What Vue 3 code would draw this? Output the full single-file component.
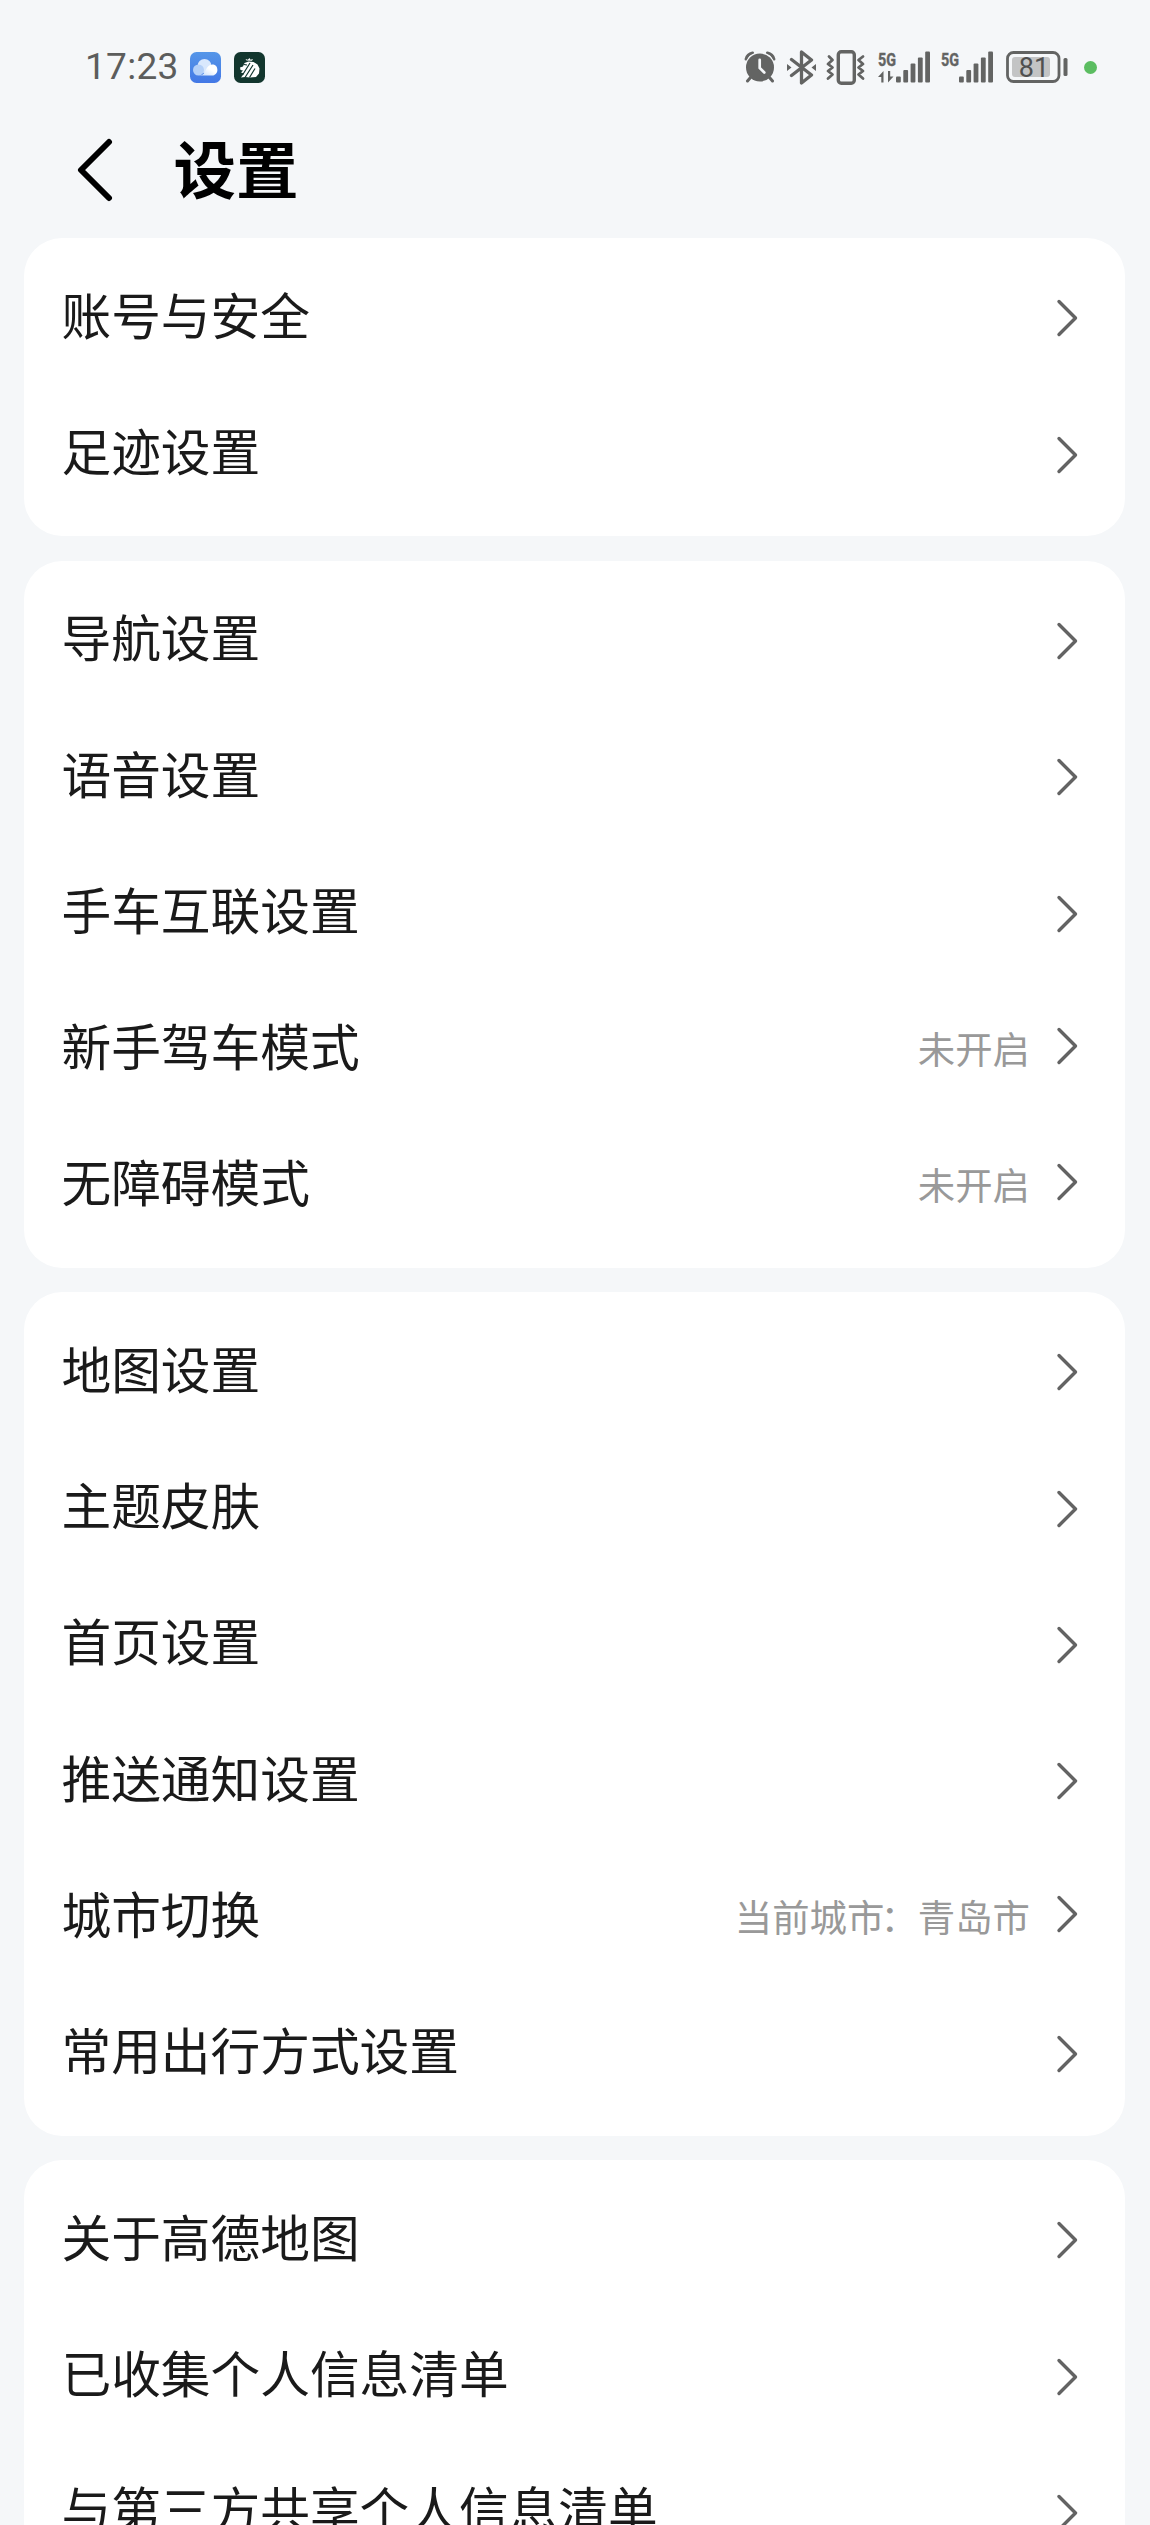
<template>
  <div class="page">
    <div class="status">
      <div class="status-left">
        <span class="time">17:23</span>
        <svg class="app-icon" viewBox="0 0 31 31">
          <defs>
            <linearGradient id="sky" x1="0" y1="0" x2="0" y2="1">
              <stop offset="0" stop-color="#5596e8" />
              <stop offset="1" stop-color="#4378e6" />
            </linearGradient>
            <linearGradient id="cloud" x1="0" y1="1" x2="1" y2="0">
              <stop offset="0" stop-color="#c3dafb" />
              <stop offset="0.6" stop-color="#fff" />
            </linearGradient>
          </defs>
          <rect width="31" height="31" rx="6.5" fill="url(#sky)" />
          <circle cx="14.5" cy="14" r="7" fill="#d9e8fd" />
          <circle cx="8.5" cy="18" r="5.5" fill="#b4d0f8" />
          <path d="M8.5 23.5c7 0 6-5 9.500-9 3-3.500 9.400-2.500 9.400 3.400 0 3-2.400 5.600-5.400 5.600z" fill="url(#cloud)" />
        </svg>
        <svg class="app-icon" viewBox="0 0 31 31">
          <rect width="31" height="31" rx="6.5" fill="#12362e" />
          <path d="M6 15.500l3-1 1.500-3.500 4-1.500 5 .5 4 2.500 2 4-.5 5-3 3.500-6 .5-5-.5-4 .5 3-4-3-1 2-2-2.500-.5z" fill="#fff" />
          <path d="M12.500 8.500l-1-1.500 2.300.8L15.500 6l1 1.800L19 7l-1 1.800z" fill="#fff" />
          <path d="M16 11L8.500 23M19 13L11 25.500M21 16.500L15.500 25.500M10 12.500l3 .5" stroke="#12362e" stroke-width="1.2" fill="none" />
        </svg>
      </div>

      <div class="status-right">
        <svg class="alarm" width="32" height="32" viewBox="0 0 32 32">
          <path d="M2.200 8A8 8 0 0 1 8.500 2M29.800 8A8 8 0 0 0 23.500 2" fill="none" stroke="#636463" stroke-width="3.2" stroke-linecap="round" />
          <circle cx="16" cy="16.5" r="15.3" fill="#f5f7f9" />
          <path d="M6.500 26.500l-3 3.500M25.500 26.500l3 3.500" fill="none" stroke="#636463" stroke-width="3" stroke-linecap="round" />
          <circle cx="16" cy="16.5" r="14" fill="#636463" />
          <path d="M15.700 8.800v8.200l4.600 4.500" fill="none" stroke="#f5f7f9" stroke-width="2.7" stroke-linecap="round" />
        </svg>
        <svg class="bluetooth" width="29" height="35" viewBox="0 0 29 35">
          <path d="M4.500 9.500L24.500 25 14.500 33V2l10 8L4.500 25.500" fill="none" stroke="#636463" stroke-width="3.3" stroke-linejoin="round" stroke-linecap="round" />
          <path d="M0 14l4.500 3.500L0 21zM29 14l-4.500 3.500L29 21z" fill="#636463" />
        </svg>
        <svg class="vibrate" width="40" height="35" viewBox="0 0 40 35">
          <rect x="12.300" y="1.800" width="16" height="31.400" rx="3" fill="none" stroke="#636463" stroke-width="3.4" />
          <path d="M3 6.500l3.500 3.500-4.500 4 4.500 3.500-4.500 3.500 4.500 3.500-4.500 4M37 6.500l-4.500 3.500 4.500 4-4.500 3.500 4.500 3.500-4.500 3.500 4.500 4" fill="none" stroke="#636463" stroke-width="2.8" stroke-linejoin="round" stroke-linecap="round" />
        </svg>
        <svg class="signal" width="53" height="32" viewBox="0 0 53 32">
          <text class="net" x="0" y="14.5" textLength="18" lengthAdjust="spacingAndGlyphs">5G</text>
          <path d="M0 26l5.500-6v11.500H3.300V26zM15.500 25.500L10 31.500V20h2.200v5.500z" fill="#636463" />
          <rect v-for="(bar, i) in bars" :key="i" :x="18 + i * 7.3" :y="31.5 - bar" width="4.8" :height="bar" rx="1" fill="#636463" />
        </svg>
        <svg class="signal second" width="53" height="32" viewBox="0 0 53 32">
          <text class="net" x="0" y="14.5" textLength="18" lengthAdjust="spacingAndGlyphs">5G</text>
          <rect v-for="(bar, i) in bars" :key="i" :x="18 + i * 7.3" :y="31.5 - bar" width="4.8" :height="bar" rx="1" fill="#636463" />
        </svg>
        <svg class="battery" width="62" height="32" viewBox="0 0 62 32">
          <rect x="1.5" y="1.5" width="51.5" height="29" rx="6" fill="none" stroke="#636463" stroke-width="2.8" />
          <rect x="6" y="6" width="38" height="20" rx="3" fill="#c3c4c5" />
          <rect x="57.5" y="7" width="4" height="18" rx="1.5" fill="#636463" />
          <text class="level" x="28" y="25.5" text-anchor="middle">81</text>
        </svg>
        <span class="dot"></span>
      </div>
    </div>

    <div class="header">
      <svg class="back" width="36" height="64" viewBox="0 0 36 64">
        <path d="M32 4L4 32l28 28" fill="none" stroke="#000" stroke-width="6" stroke-linecap="round" stroke-linejoin="round" />
      </svg>
      <h1 class="title">设置</h1>
    </div>

    <div class="groups">
      <div v-for="(group, g) in groups" :key="g" class="card">
        <div v-for="item in group" :key="item.label" class="row">
          <span class="label">{{ item.label }}</span>
          <span v-if="item.value" class="value"><template v-if="item.prefix">{{ item.prefix }}<span class="colon">：</span></template>{{ item.value }}</span>
          <svg class="arrow" :class="{ raised: item.value }" width="22" height="38" viewBox="0 0 22 38">
            <path d="M3 2.500L19.500 19 3 35.500" fill="none" stroke="#636363" stroke-width="3.4" stroke-linecap="round" stroke-linejoin="round" />
          </svg>
        </div>
      </div>
    </div>
  </div>
</template>

<script setup>
import { ref } from 'vue';

// Heights of the signal bars
const bars = [6, 12.5, 19, 25, 31];

const groups = ref([
  [
    { label: '账号与安全' },
    { label: '足迹设置' }
  ],
  [
    { label: '导航设置' },
    { label: '语音设置' },
    { label: '手车互联设置' },
    { label: '新手驾车模式', value: '未开启' },
    { label: '无障碍模式', value: '未开启' }
  ],
  [
    { label: '地图设置' },
    { label: '主题皮肤' },
    { label: '首页设置' },
    { label: '推送通知设置' },
    { label: '城市切换', prefix: '当前城市', value: '青岛市' },
    { label: '常用出行方式设置' }
  ],
  [
    { label: '关于高德地图' },
    { label: '已收集个人信息清单' },
    { label: '与第三方共享个人信息清单' }
  ]
]);
</script>

<style>
body {
  margin: 0;
  background: #f5f7f9;
}
</style>

<style scoped>
.page {
  height: 2525px;
  overflow: hidden;
  background: #f5f7f9;
  font-family: "Noto Sans CJK SC", sans-serif;
}

.status {
  display: flex;
  justify-content: space-between;
  align-items: center;
  height: 134px;
  padding: 0 53px 0 85px;
  box-sizing: border-box;
}

.status-left,
.status-right {
  display: flex;
  align-items: center;
}

.time {
  width: 105px;
  font-family: Roboto, sans-serif;
  font-size: 37px;
  letter-spacing: 0.3px;
  line-height: 44px;
  color: #5c5d5c;
}

.app-icon {
  width: 31px;
  height: 31px;
  margin-right: 13px;
}

.bluetooth {
  margin-left: 11px;
}

.vibrate {
  margin-left: 10px;
}

.signal {
  margin-left: 12px;
  overflow: visible;
}

.signal.second {
  margin-left: 10px;
}

.net {
  font-family: Roboto, sans-serif;
  font-size: 19px;
  font-weight: 700;
  fill: #636463;
  stroke: #636463;
  stroke-width: 0.4px;
}

.battery {
  margin-left: 12px;
}

.level {
  font-family: Roboto, sans-serif;
  font-size: 27px;
  fill: #505050;
}

.dot {
  width: 13px;
  height: 13px;
  margin-left: 16px;
  border-radius: 50%;
  background: #5bbd61;
}

.header {
  display: flex;
  align-items: center;
  height: 72px;
  margin-bottom: 32.3px;
  padding-left: 76.5px;
}

.title {
  margin: 0 0 0 61px;
  padding-bottom: 6px;
  font-size: 62.5px;
  font-weight: 700;
  line-height: 72px;
  color: #000;
}

.groups {
  display: flex;
  flex-direction: column;
  gap: 24.4px;
  padding: 0 25px 0 24px;
}

.card {
  padding: 12px 0 13.6px;
  border-radius: 38px;
  background: #fff;
}

.row {
  display: flex;
  align-items: center;
  height: 136.3px;
  padding: 0 47px 0 37.5px;
}

.label {
  flex: 1;
  padding-bottom: 11.5px;
  font-size: 49.7px;
  line-height: 72px;
  color: #1a1a1a;
}

.value {
  margin-right: 26px;
  padding-bottom: 3.5px;
  font-size: 37.4px;
  line-height: 54px;
  color: #999;
}

.colon {
  margin: 0 0 0 -4px;
}

.arrow.raised {
  margin-bottom: 8px;
}
</style>
